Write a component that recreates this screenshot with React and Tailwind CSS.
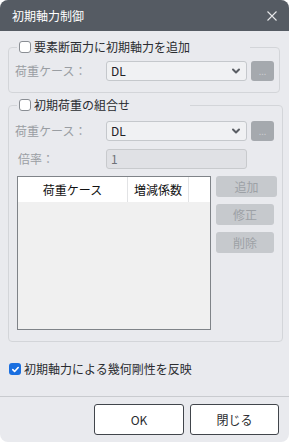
import React from 'react';

const font = { fontFamily: '"Noto Sans CJK JP", "Noto Sans", sans-serif' };

const Check = ({ checked }) =>
    checked ? (
        <span className="w-[12px] h-[12px] rounded-[3px] bg-[#1a6fe0] flex items-center justify-center shrink-0">
            <svg className="w-[9px] h-[9px]" viewBox="0 0 10 10" fill="none" stroke="white" strokeWidth="1.8" strokeLinecap="round" strokeLinejoin="round">
                <path d="M2 5.2l2 2 4-4.4" />
            </svg>
        </span>
    ) : (
        <span className="w-[12px] h-[12px] rounded-[3px] bg-white border border-[#8a8e94] shrink-0" />
    );

const Chevron = () => (
    <svg className="w-[10px] h-[10px]" viewBox="0 0 10 10" fill="none" stroke="#5a5e64" strokeWidth="2" strokeLinecap="round" strokeLinejoin="round">
        <path d="M2 3.5l3 3 3-3" />
    </svg>
);

const SelectRow = ({ label }) => (
    <div className="flex items-center h-[20px]">
        <span className="w-[91px] text-[12px] leading-[20px] text-[#9a9ea3]">{label}</span>
        <div className="w-[141px] h-[20px] rounded-[3px] border border-[#c5c8cc] bg-[#f0f1f3] flex items-center justify-between pl-[4px] pr-[5px]">
            <span className="text-[12px] text-[#1f2226]">DL</span>
            <Chevron />
        </div>
        <div className="ml-[4px] w-[23px] h-[20px] rounded-[3px] bg-[#a5a9ae] flex items-center justify-center text-[9px] text-[#c9ccd0] leading-none">...</div>
    </div>
);

const SideButton = ({ children, w }) => (
    <div className={`${w} h-[21px] rounded-[3px] bg-[#c6c9cd] flex items-center justify-center text-[12px] text-[#9da1a6]`}>
        {children}
    </div>
);

export default function App() {
    return (
        <div className="w-[289px] h-[442px] bg-white" style={font}>
            <div className="w-[289px] h-[442px] rounded-[8px] overflow-hidden bg-[#e9eaee] flex flex-col">
                {/* title bar */}
                <div className="h-[31px] bg-[#555b63] flex items-center justify-between pl-[12px] pr-[12px] shrink-0">
                    <span className="text-[12px] text-white leading-none">初期軸力制御</span>
                    <svg className="w-[10px] h-[10px]" viewBox="0 0 10 10" stroke="#e6e7e9" strokeWidth="1.1">
                        <path d="M0.5 0.5l9 9M9.5 0.5l-9 9" />
                    </svg>
                </div>

                {/* group 1 */}
                <fieldset className="mt-[8px] mx-[8px] w-[272px] border border-[#d3d5d9] rounded-[4px] pl-[6px] pr-[5px] pt-[6px] pb-[11px]">
                    <legend className="ml-[2px] pl-[2px] pr-[60px] h-[16px] flex items-center gap-[3px] text-[12px] text-[#2a2c30] leading-[16px]">
                        <Check />
                        <span>要素断面力に初期軸力を追加</span>
                    </legend>
                    <SelectRow label="荷重ケース：" />
                </fieldset>

                {/* group 2 */}
                <fieldset className="mt-[4px] mx-[8px] w-[272px] border border-[#d3d5d9] rounded-[4px] pl-[6px] pr-[5px] pt-[8px] pb-[11px]">
                    <legend className="ml-[2px] pl-[2px] pr-[60px] h-[16px] flex items-center gap-[3px] text-[12px] text-[#2a2c30] leading-[16px]">
                        <Check />
                        <span>初期荷重の組合せ</span>
                    </legend>
                    <SelectRow label="荷重ケース：" />
                    <div className="flex items-center h-[20px] mt-[8px]">
                        <span className="w-[91px] pl-[3px] text-[12px] leading-[20px] text-[#9a9ea3]">倍率：</span>
                        <div className="w-[141px] h-[20px] rounded-[3px] border border-[#c8cacd] bg-[#e0e1e5] flex items-center pl-[4px]">
                            <span className="text-[12px] text-[#6e7278]">1</span>
                        </div>
                    </div>
                    <div className="flex mt-[7px] ml-[2px] gap-[5px]">
                        <div className="w-[194px] h-[154px] border border-[#7f8388] bg-[#f0f0f0] flex flex-col">
                            <div className="h-[25px] bg-white flex text-[12px] text-[#111]">
                                <div className="w-[110px] border-r border-[#e2e3e5] flex items-center justify-center">荷重ケース</div>
                                <div className="w-[61px] border-r border-[#e2e3e5] flex items-center justify-center">増減係数</div>
                                <div className="flex-1" />
                            </div>
                        </div>
                        <div className="flex flex-col gap-[7px]">
                            <SideButton w="w-[61px]">追加</SideButton>
                            <SideButton w="w-[58px]">修正</SideButton>
                            <SideButton w="w-[58px]">削除</SideButton>
                        </div>
                    </div>
                </fieldset>

                {/* geometric stiffness */}
                <div className="mt-[19px] ml-[9px] flex items-center gap-[3px] h-[16px]">
                    <Check checked />
                    <span className="text-[12px] text-[#2a2c30] leading-[16px]">初期軸力による幾何剛性を反映</span>
                </div>

                <div className="mt-[19px] h-[1px] bg-[#c9cbcf]" />

                <div className="flex justify-end gap-[6px] pr-[10px] mt-[7px]">
                    <button className="w-[90px] h-[31px] rounded-[3px] border border-[#41454b] bg-white text-[12px] text-[#2a2c30]">OK</button>
                    <button className="w-[89px] h-[31px] rounded-[3px] border border-[#41454b] bg-white text-[12px] text-[#2a2c30]">閉じる</button>
                </div>
            </div>
        </div>
    );
}
